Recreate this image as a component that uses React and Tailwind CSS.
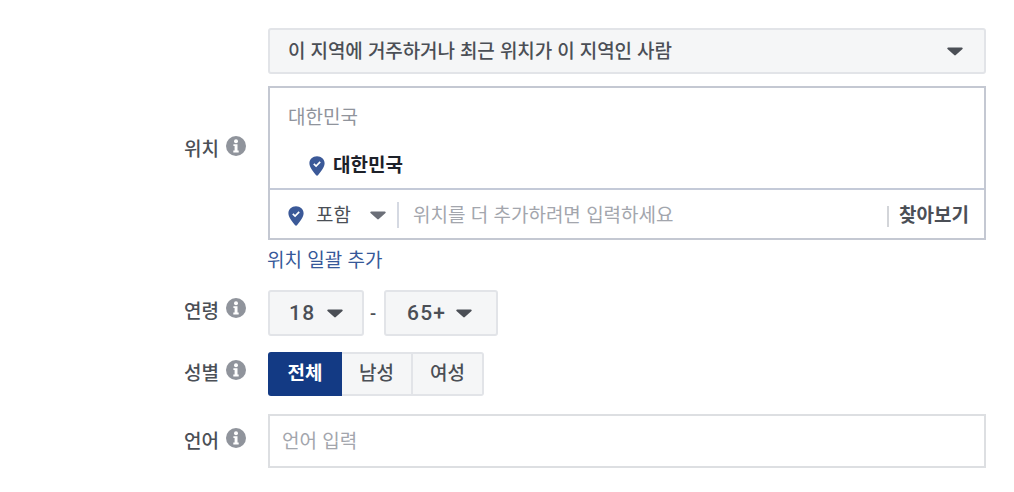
import React from 'react';

const fontStack = { fontFamily: '"Liberation Sans", "Noto Sans CJK KR", sans-serif' };

const Caret = ({ className = 'fill-[#4b4f56]' }) => (
  <svg width="16" height="9" viewBox="0 0 16 9" className={className}>
    <path d="M1.2 0.5h13.6c.8 0 1.2.9.7 1.5L8.8 8.1c-.4.5-1.2.5-1.6 0L.5 2C0 1.4.4.5 1.2.5z" />
  </svg>
);

const InfoIcon = () => (
  <svg width="20" height="20" viewBox="0 0 20 20" className="mb-[7px] shrink-0">
    <circle cx="10" cy="10" r="10" fill="#90949c" />
    <circle cx="10" cy="5.3" r="2" fill="#fff" />
    <path d="M7.4 8.2h4.1v6.400h1.200v1.800H7.300v-1.800h1.300v-4.600H7.400z" fill="#fff" />
  </svg>
);

const Pin = () => (
  <svg width="16" height="20" viewBox="0 0 16 20" className="shrink-0">
    <path d="M8 0.3c4.3 0 7.6 2.9 7.6 7 0 3.900-3.500 8-6.600 11.900-.5.6-1.400.6-1.900 0C4 15.300.4 11.200.4 7.300c0-4.100 3.300-7 7.600-7z" fill="#3b5998" />
    <path d="M4.800 7.800l2.300 2.300 4.100-4.200" fill="none" stroke="#fff" strokeWidth="1.700" />
  </svg>
);

const Row = ({ label, children, className = '', labelClass = '' }) => (
  <div className={`flex ${className}`}>
    <div className={`flex w-[268px] shrink-0 items-center justify-end gap-[7px] pr-[22px] text-[19px] font-medium text-[#4b4f56] ${labelClass}`}>
      <span className="pt-[3px]">{label}</span>
      <InfoIcon />
    </div>
    {children}
  </div>
);

const App = () => {
  return (
    <div className="h-[492px] w-[1014px] overflow-hidden bg-white pt-[28px]" style={fontStack}>
      {/* Location */}
      <div className="ml-[268px] flex h-[46px] w-[718px] items-center justify-between rounded-[3px] border-2 border-[#e2e4e8] bg-[#f5f6f7] pl-[18px] pr-[21px] text-[19px] font-medium text-[#4b4f56]">
        <span className="pt-[3px] tracking-[-0.1px]">이 지역에 거주하거나 최근 위치가 이 지역인 사람</span>
        <Caret />
      </div>

      <Row label="위치" className="mt-[12px]" labelClass="pb-[28px]">
        <div className="w-[718px] border-2 border-[#c4c8d2]">
          <div className="h-[100px] pl-[18px] pt-[17px]">
            <div className="text-[19px] leading-[26px] text-[#90949c]">대한민국</div>
            <div className="ml-[21px] mt-[22px] flex items-center gap-[8px] text-[19px] font-bold leading-[26px] text-[#1d2129]">
              <Pin />
              <span>대한민국</span>
            </div>
          </div>
          <div className="flex h-[50px] items-center border-t-2 border-[#c4cad8] pl-[18px] pr-[15px] pt-[4px] text-[19px]">
            <Pin />
            <span className="ml-[12px] text-[#4b4f56]">포함</span>
            <Caret className="ml-[19px] -mt-[2px] fill-[#6b6f78]" />
            <span className="ml-[11px] -mt-[3px] h-[26px] w-[2px] bg-[#d5d9e2]" />
            <span className="ml-[14px] flex-1 text-[#a3a6ad]">위치를 더 추가하려면 입력하세요</span>
            <span className="h-[21px] w-[2px] bg-[#d3d5d9]" />
            <span className="ml-[10px] font-bold text-[#4b4f56]">찾아보기</span>
          </div>
        </div>
      </Row>

      <a className="ml-[267px] mt-[8px] block text-[19px] leading-[26px] text-[#365899]">위치 일괄 추가</a>

      {/* Age */}
      <Row label="연령" className="mt-[16px]" labelClass="pb-[4px]">
        <div className="flex items-center font-['Roboto'] text-[21px] font-medium tracking-[1.2px] text-[#4b4f56]">
          <div className="flex h-[46px] w-[96px] items-center rounded-[3px] border-2 border-[#e2e4e8] bg-[#f5f6f7] pl-[19px]">
            <span className="pt-[2px]">18</span>
            <span className="ml-[12px]"><Caret /></span>
          </div>
          <span className="ml-[6px] mr-[5px] w-[9px] text-[18px]">-</span>
          <div className="flex h-[46px] w-[114px] items-center rounded-[3px] border-2 border-[#e2e4e8] bg-[#f5f6f7] pl-[21px]">
            <span className="pt-[2px]">65+</span>
            <span className="ml-[10px]"><Caret /></span>
          </div>
        </div>
      </Row>

      {/* Gender */}
      <Row label="성별" className="mt-[16px]" labelClass="pb-[2px]">
        <div className="flex h-[44px] text-[19px] font-medium text-[#4b4f56]">
          <div className="flex w-[74px] items-center justify-center rounded-l-[3px] bg-[#133a84] font-bold text-white">전체</div>
          <div className="flex w-[71px] items-center justify-center border-y-2 border-r-2 border-[#e2e4e8] bg-[#f5f6f7]">남성</div>
          <div className="flex w-[71px] items-center justify-center rounded-r-[3px] border-y-2 border-r-2 border-[#e2e4e8] bg-[#f5f6f7]">여성</div>
        </div>
      </Row>

      {/* Language */}
      <Row label="언어" className="mt-[18px]">
        <div className="flex h-[54px] w-[718px] items-center border-2 border-[#dddfe2] pl-[12px] pt-[3px] text-[19px] text-[#a3a6ad]">
          언어 입력
        </div>
      </Row>
    </div>
  );
};

export default App;
